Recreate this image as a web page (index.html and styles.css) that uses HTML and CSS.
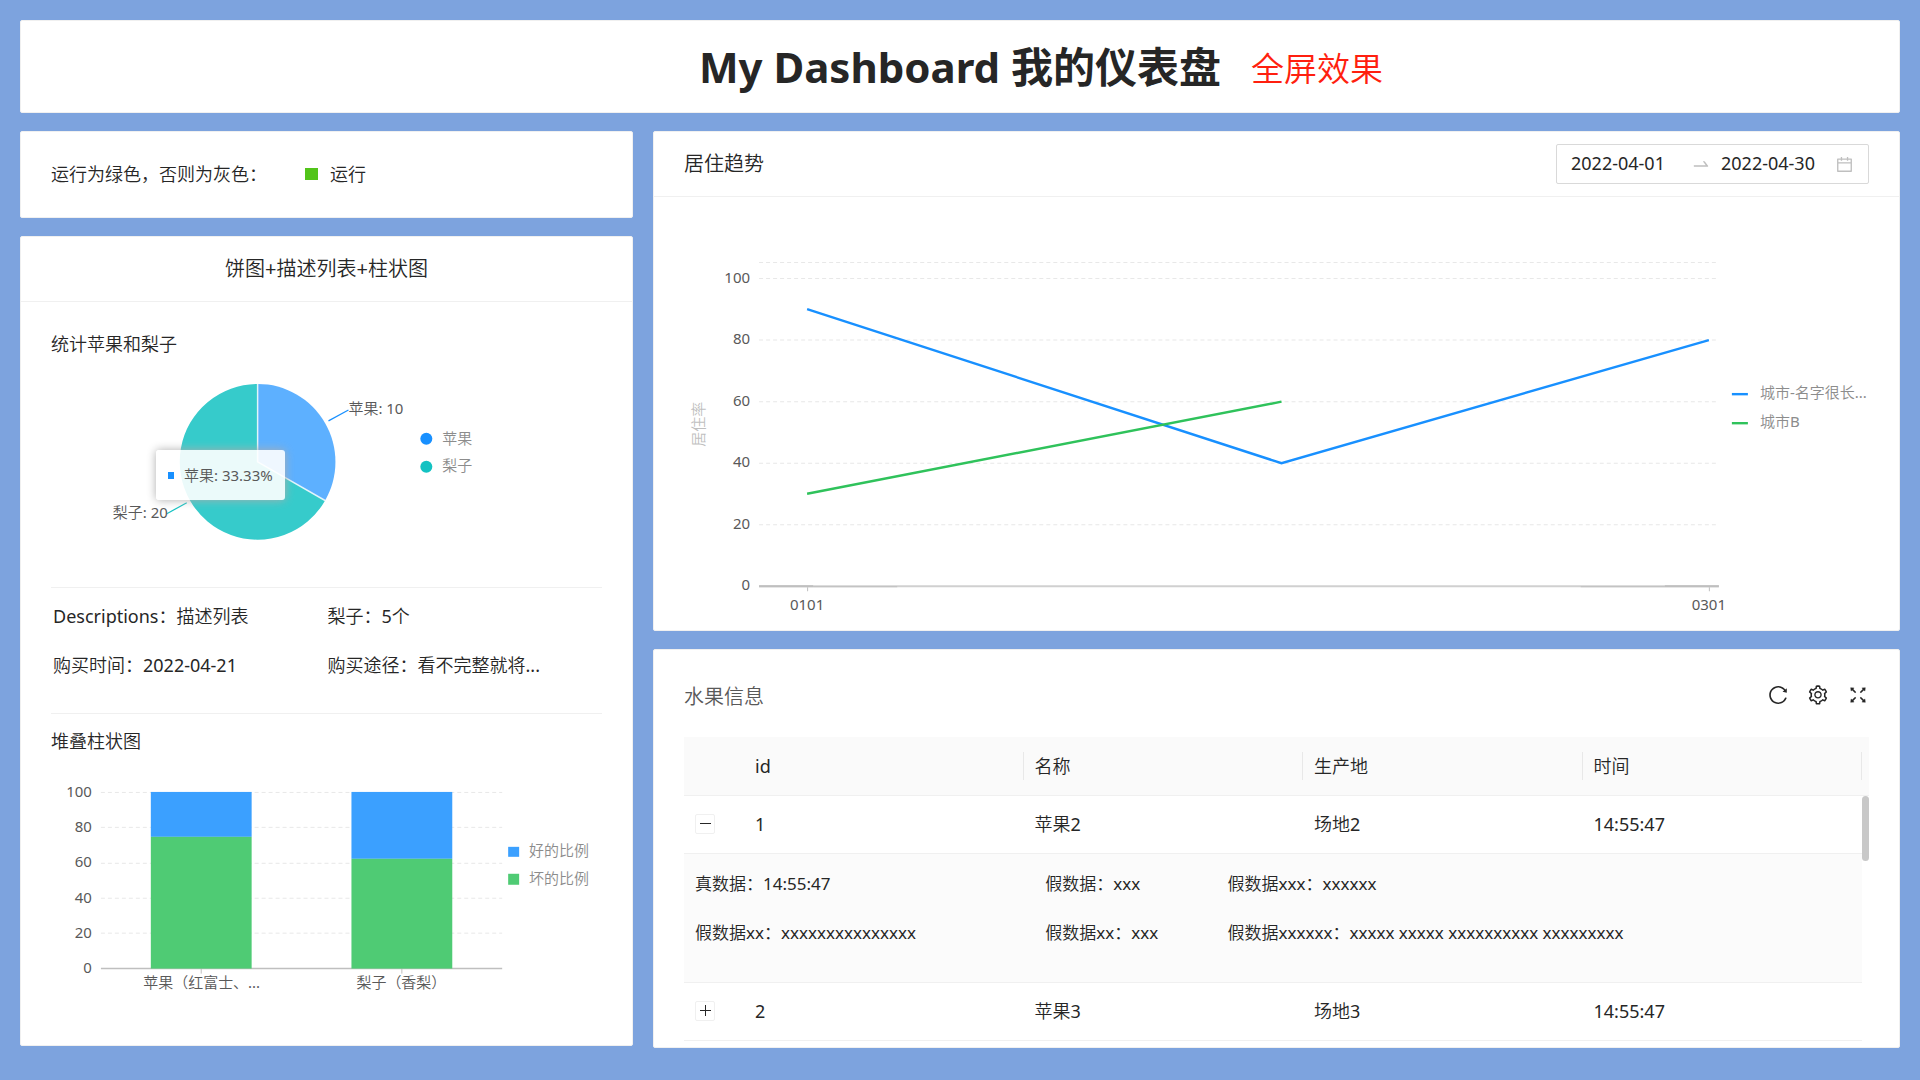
FILE: index.html
```html
<!DOCTYPE html>
<html lang="zh-CN">
<head>
<meta charset="utf-8">
<meta name="viewport" content="width=device-width, initial-scale=1">
<title>My Dashboard 我的仪表盘</title>
<link rel="stylesheet" href="styles.css">
</head>
<body>
<div class="page">
  <header class="card banner">
    <h1 class="banner-title">My Dashboard 我的仪表盘</h1>
    <span class="banner-note">全屏效果</span>
  </header>

  <main class="layout">
    <div class="column">
      <section class="card status">
        <span>运行为绿色，否则为灰色：</span>
        <span class="status-value"><i class="status-mark"></i>运行</span>
      </section>

      <section class="card">
        <div class="card-head card-head-center"><h2 class="card-title">饼图+描述列表+柱状图</h2></div>
        <div class="card-body">
          <h3 class="block-title block-title-first">统计苹果和梨子</h3>
          <div class="pie-wrap">
            <svg class="chart" viewBox="0 0 552 229" role="img" aria-label="统计苹果和梨子">
              <path d="M207 104V26A78 78 0 0 1 274.5 143Z" fill="#5db0ff"/>
              <path d="M207 104L274.5 143A78 78 0 1 1 207 26Z" fill="#36cbcb"/>
              <path d="M207 25V104L275 143" fill="none" stroke="#fff" stroke-opacity=".8" stroke-width="1.5"/>
              <path d="M278 63L298 52" stroke="#1890ff" stroke-width="1.2"/>
              <path d="M136 145L116 156" stroke="#13c2c2" stroke-width="1.2"/>
              <g class="axis-text">
                <text x="298" y="56">苹果: 10</text>
                <text x="117" y="160" text-anchor="end">梨子: 20</text>
              </g>
              <circle cx="376" cy="81" r="6" fill="#1890ff"/>
              <circle cx="376" cy="109" r="6" fill="#13c2c2"/>
              <g class="legend-text">
                <text x="392" y="86">苹果</text>
                <text x="392" y="113">梨子</text>
              </g>
            </svg>
            <div class="tooltip"><i class="tooltip-mark"></i>苹果: 33.33%</div>
          </div>
          <dl class="facts">
            <div class="fact"><dt>Descriptions：</dt><dd>描述列表</dd></div>
            <div class="fact"><dt>梨子：</dt><dd>5个</dd></div>
            <div class="fact"><dt>购买时间：</dt><dd>2022-04-21</dd></div>
            <div class="fact"><dt>购买途径：</dt><dd>看不完整就将...</dd></div>
          </dl>
          <h3 class="block-title">堆叠柱状图</h3>
          <svg class="chart" viewBox="0 0 552 255" role="img" aria-label="堆叠柱状图">
            <path class="grid-line" d="M50 37.5H452M50 72.5H452M50 108.5H452M50 143.5H452M50 178.5H452"/>
            <path d="M50 214H452" stroke="#bfbfbf" stroke-width="1.5"/>
            <path d="M150.500 214V219M351.500 214V219" stroke="#bfbfbf"/>
            <g fill="#3ba0ff"><rect x="100" y="37" width="101" height="45"/><rect x="301" y="37" width="101" height="67"/></g>
            <g fill="#4fcb74"><rect x="100" y="82" width="101" height="132"/><rect x="301" y="104" width="101" height="110"/></g>
            <g class="axis-text" text-anchor="end">
              <text x="41" y="42">100</text><text x="41" y="77">80</text><text x="41" y="112">60</text>
              <text x="41" y="148">40</text><text x="41" y="183">20</text><text x="41" y="218">0</text>
            </g>
            <g class="axis-text" text-anchor="middle">
              <text x="151" y="233">苹果（红富士、...</text>
              <text x="351" y="233">梨子（香梨）</text>
            </g>
            <rect x="458" y="92" width="11" height="10" fill="#3ba0ff"/>
            <rect x="458" y="119" width="11" height="11" fill="#4fcb74"/>
            <g class="legend-text">
              <text x="479" y="101">好的比例</text>
              <text x="479" y="129">坏的比例</text>
            </g>
          </svg>
        </div>
      </section>
    </div>

    <div class="column">
      <section class="card">
        <div class="card-head">
          <h2 class="card-title">居住趋势</h2>
          <div class="range">
            <input class="range-input" type="text" value="2022-04-01" aria-label="开始日期">
            <svg class="range-arrow" viewBox="0 0 1024 1024" aria-hidden="true"><path d="M873.1 596.2l-164-208A32 32 0 00684 376h-64.8c-6.7 0-10.4 7.7-6.3 13l144.3 183H152c-4.4 0-8 3.6-8 8v60c0 4.400 3.600 8 8 8h695.900c26.800 0 41.700-30.800 25.200-51.800z"/></svg>
            <input class="range-input" type="text" value="2022-04-30" aria-label="结束日期">
            <svg class="range-calendar" viewBox="0 0 1024 1024" aria-hidden="true"><path d="M880 184H712v-64c0-4.400-3.600-8-8-8h-56c-4.400 0-8 3.600-8 8v64H384v-64c0-4.400-3.600-8-8-8h-56c-4.400 0-8 3.600-8 8v64H144c-17.700 0-32 14.300-32 32v664c0 17.700 14.300 32 32 32h736c17.700 0 32-14.300 32-32V216c0-17.700-14.300-32-32-32zm-40 656H184V460h656v380zM184 392V256h128v48c0 4.400 3.600 8 8 8h56c4.400 0 8-3.600 8-8v-48h256v48c0 4.400 3.600 8 8 8h56c4.400 0 8-3.600 8-8v-48h128v136H184z"/></svg>
          </div>
        </div>
        <div class="card-body">
          <svg class="chart" viewBox="0 0 1184 433" role="img" aria-label="居住趋势">
            <path class="grid-line" d="M75 65.500H1032M75 81.500H1032M75 143H1032M75 204.500H1032M75 266H1032M75 327.500H1032"/>
            <path d="M75 389H1034" stroke="#d0d0d0" stroke-width="2"/>
            <path d="M75 389H129M980 389H1034" stroke="#bfbfbf" stroke-width="2"/>
            <path d="M129 389.500H213M896 389.500H980M123.500 390V394M1024.500 390V394" stroke="#bfbfbf"/>
            <path d="M123 112L597 266L1024 143" fill="none" stroke="#1890ff" stroke-width="2.400"/>
            <path d="M123 296.500L597 204.500" stroke="#2fc25b" stroke-width="2.400"/>
            <g class="axis-text" text-anchor="end">
              <text x="66" y="86">100</text><text x="66" y="147">80</text><text x="66" y="209">60</text>
              <text x="66" y="270">40</text><text x="66" y="332">20</text><text x="66" y="393">0</text>
            </g>
            <g class="axis-text" text-anchor="middle"><text x="123" y="413">0101</text><text x="1024" y="413">0301</text></g>
            <text class="axis-name" text-anchor="middle" transform="translate(20 227) rotate(-90)">居住率</text>
            <path d="M1047 197H1063" stroke="#1890ff" stroke-width="2.400"/>
            <path d="M1047 226H1063" stroke="#2fc25b" stroke-width="2.400"/>
            <g class="legend-text"><text x="1075" y="201">城市-名字很长...</text><text x="1075" y="230">城市B</text></g>
          </svg>
        </div>
      </section>

      <section class="card table-card">
        <div class="toolbar">
          <h2 class="card-title toolbar-title">水果信息</h2>
          <div class="tools">
            <button class="tool" type="button" aria-label="刷新"><svg viewBox="0 0 1024 1024"><path d="M909.1 209.3l-56.4 44.1C775.8 155.1 656.2 92 521.9 92 290 92 102.3 279.5 102 511.5 101.7 743.7 289.8 932 521.9 932c181.3 0 335.8-115 394.6-276.1 1.5-4.2-.7-8.9-4.9-10.3l-56.7-19.5a8 8 0 00-10.1 4.8c-1.8 5-3.8 10-5.9 14.9-17.3 41-42.1 77.8-73.7 109.4A344.77 344.77 0 01655.9 829c-42.3 17.9-87.4 27-133.8 27-46.5 0-91.5-9.1-133.8-27A341.5 341.5 0 01279 755.2a342.16 342.16 0 01-73.7-109.4c-17.9-42.4-27-87.4-27-133.9s9.1-91.5 27-133.9c17.3-41 42.1-77.8 73.7-109.4 31.6-31.6 68.4-56.4 109.3-73.8 42.3-17.9 87.4-27 133.8-27 46.5 0 91.5 9.1 133.8 27a341.5 341.5 0 01109.3 73.8c9.900 9.900 19.200 20.400 27.800 31.400l-60.200 47a8 8 0 003 14.100l175.600 43c5 1.200 9.900-2.600 9.900-7.700l.8-180.900c-.1-6.600-7.800-10.300-13-6.200z"/></svg></button>
            <button class="tool" type="button" aria-label="列设置"><svg viewBox="0 0 1024 1024"><path d="M924.8 625.7l-65.5-56c3.1-19 4.7-38.4 4.7-57.8s-1.6-38.8-4.7-57.8l65.5-56a32.03 32.03 0 009.3-35.2l-.9-2.6a443.74 443.74 0 00-79.7-137.9l-1.8-2.1a32.12 32.12 0 00-35.1-9.5l-81.3 28.9c-30-24.6-63.5-44-99.7-57.6l-15.7-85a32.05 32.05 0 00-25.8-25.7l-2.7-.5c-52.1-9.4-106.9-9.4-159 0l-2.7.5a32.05 32.05 0 00-25.8 25.7l-15.8 85.4a351.86 351.86 0 00-99 57.4l-81.9-29.1a32 32 0 00-35.1 9.5l-1.8 2.1a446.02 446.02 0 00-79.7 137.9l-.9 2.6c-4.5 12.5-.8 26.5 9.3 35.2l66.3 56.6c-3.1 18.8-4.6 38-4.6 57.1 0 19.2 1.5 38.4 4.6 57.1L99 625.5a32.03 32.03 0 00-9.3 35.2l.9 2.6c18.1 50.4 44.9 96.9 79.7 137.9l1.8 2.1a32.12 32.12 0 0035.1 9.5l81.9-29.1c29.8 24.5 63.1 43.9 99 57.4l15.8 85.4a32.05 32.05 0 0025.8 25.7l2.7.5a449.4 449.4 0 00159 0l2.7-.5a32.05 32.05 0 0025.8-25.7l15.7-85a350 350 0 0099.7-57.6l81.3 28.9a32 32 0 0035.1-9.5l1.8-2.1c34.8-41.1 61.6-87.5 79.7-137.9l.9-2.6c4.5-12.3.8-26.3-9.3-35zM788.3 465.9c2.5 15.1 3.8 30.6 3.8 46.1s-1.3 31-3.8 46.1l-6.6 40.1 74.7 63.9a370.03 370.03 0 01-42.6 73.6L721 702.8l-31.4 25.8c-23.9 19.6-50.5 35-79.3 45.8l-38.1 14.3-17.9 97a377.5 377.5 0 01-85 0l-17.9-97.2-37.8-14.5c-28.5-10.8-55-26.2-78.7-45.7l-31.4-25.9-93.4 33.2c-17-22.9-31.2-47.6-42.6-73.6l75.5-64.5-6.5-40c-2.4-14.9-3.7-30.3-3.7-45.5 0-15.3 1.2-30.6 3.7-45.5l6.5-40-75.500-64.500c11.300-26.100 25.600-50.700 42.600-73.600l93.400 33.200 31.400-25.900c23.700-19.500 50.200-34.900 78.700-45.700l37.900-14.300 17.900-97.200c28.100-3.200 56.800-3.200 85 0l17.900 97 38.100 14.300c28.700 10.800 55.400 26.200 79.300 45.800l31.400 25.800 92.800-32.900c17 22.900 31.200 47.600 42.600 73.600L781.800 426l6.500 39.900zM512 326c-97.200 0-176 78.800-176 176s78.800 176 176 176 176-78.800 176-176-78.800-176-176-176zm79.200 255.200A111.600 111.600 0 01512 614c-29.900 0-58-11.700-79.200-32.800A111.600 111.600 0 01400 502c0-29.900 11.700-58 32.800-79.200C454 401.600 482.100 390 512 390c29.900 0 58 11.600 79.200 32.800A111.600 111.600 0 01624 502c0 29.900-11.700 58-32.800 79.200z"/></svg></button>
            <button class="tool" type="button" aria-label="全屏"><svg viewBox="0 0 1024 1024"><path d="M290 236.4l43.9-43.9a8.01 8.01 0 00-4.7-13.6L169 160c-5.100-.6-9.500 3.700-8.900 8.900L179 329.100c.8 6.600 8.900 9.400 13.600 4.700l43.700-43.700L370 423.700c3.100 3.100 8.200 3.100 11.300 0l42.400-42.300c3.100-3.100 3.100-8.200 0-11.300L290 236.400zm352.700 187.300c3.100 3.100 8.200 3.100 11.300 0l133.700-133.600 43.700 43.700a8.010 8.010 0 0013.600-4.700L863.900 169c.6-5.100-3.700-9.500-8.900-8.900L694.800 179c-6.600.8-9.400 8.900-4.700 13.600l43.900 43.900L600.300 370a8.030 8.030 0 000 11.300l42.400 42.400zM845 694.900c-.8-6.600-8.900-9.400-13.600-4.700l-43.700 43.700L654 600.300a8.030 8.030 0 00-11.300 0l-42.400 42.300a8.030 8.030 0 000 11.300L734 787.600l-43.900 43.900a8.010 8.010 0 004.700 13.600L855 864c5.100.6 9.500-3.700 8.900-8.900L845 694.900zm-463.700-94.600a8.030 8.030 0 00-11.300 0L236.300 733.900l-43.700-43.700a8.010 8.010 0 00-13.600 4.700L160.100 855c-.6 5.100 3.700 9.500 8.900 8.900L329.200 845c6.600-.8 9.400-8.900 4.700-13.600L290 787.600 423.700 654c3.100-3.100 3.100-8.200 0-11.300l-42.400-42.400z"/></svg></button>
          </div>
        </div>
        <div class="table-wrap">
          <table class="table">
            <colgroup><col class="col-expand"><col><col><col><col><col class="col-scroll"></colgroup>
            <thead>
              <tr>
                <th></th>
                <th scope="col"><span class="th-text">id</span></th>
                <th scope="col"><span class="th-text">名称</span></th>
                <th scope="col"><span class="th-text">生产地</span></th>
                <th scope="col"><span class="th-text">时间</span></th>
                <th></th>
              </tr>
            </thead>
            <tbody>
              <tr>
                <td><button class="expand" type="button" aria-label="收起" aria-expanded="true"><svg viewBox="0 0 11 11"><path d="M0 5.500H11"/></svg></button></td>
                <td>1</td><td>苹果2</td><td>场地2</td><td>14:55:47</td><td class="gutter"></td>
              </tr>
              <tr>
                <td class="detail" colspan="5">
                  <dl class="detail-grid">
                    <div class="fact"><dt>真数据：</dt><dd>14:55:47</dd></div>
                    <div class="fact"><dt>假数据：</dt><dd>xxx</dd></div>
                    <div class="fact"><dt>假数据xxx：</dt><dd>xxxxxx</dd></div>
                    <div class="fact"><dt>假数据xx：</dt><dd>xxxxxxxxxxxxxxx</dd></div>
                    <div class="fact"><dt>假数据xx：</dt><dd>xxx</dd></div>
                    <div class="fact"><dt>假数据xxxxxx：</dt><dd>xxxxx xxxxx xxxxxxxxxx xxxxxxxxx</dd></div>
                  </dl>
                </td>
                <td class="gutter"></td>
              </tr>
              <tr>
                <td><button class="expand" type="button" aria-label="展开" aria-expanded="false"><svg viewBox="0 0 11 11"><path d="M0 5.500H11M5.500 0V11"/></svg></button></td>
                <td>2</td><td>苹果3</td><td>场地3</td><td>14:55:47</td><td class="gutter"></td>
              </tr>
            </tbody>
          </table>
          <div class="scroll-thumb"></div>
        </div>
      </section>
    </div>
  </main>
</div>
</body>
</html>
```
FILE: styles.css
```css
* { box-sizing: border-box; }

body {
  margin: 0;
  background: #7da3de;
  color: #262626;
  font: 400 18px/28px "Noto Sans", "Noto Sans CJK SC DemiLight", "Noto Sans CJK SC Light", "Noto Sans CJK SC", sans-serif;
}

h1, h2, h3, dl, dd { margin: 0; }
h2, h3 { font-weight: inherit; }

.page {
  display: flex;
  flex-direction: column;
  gap: 18px;
  padding: 20px 20px 32px;
}

.card {
  background: #fff;
  border: 1px solid #f0f0f0;
  border-radius: 2px;
}

/* Banner */
.banner {
  display: grid;
  grid-template-columns: 1fr auto 1fr;
  align-items: center;
  padding: 17px 30px;
}
.banner-title {
  grid-column: 2;
  font-family: "Noto Sans", "Noto Sans CJK SC", sans-serif;
  font-size: 42px;
  line-height: 57px;
  font-weight: 700;
}
.banner-note {
  padding: 4px 0 0 30px;
  color: #ff1f0f;
  font-size: 33px;
  line-height: 48px;
}

/* Columns */
.layout {
  display: grid;
  grid-template-columns: minmax(0, 613fr) minmax(0, 1247fr);
  gap: 20px;
  align-items: start;
}
.column {
  display: flex;
  flex-direction: column;
  gap: 18px;
}

.card-head {
  display: flex;
  align-items: center;
  justify-content: space-between;
  padding: 12px 30px;
  min-height: 65px;
  border-bottom: 1px solid #f0f0f0;
}
.card-head-center { justify-content: center; }
.card-title { font-size: 20px; line-height: 32px; }
.card-body { padding: 0 30px; }

/* Running state */
.status {
  display: flex;
  align-items: center;
  gap: 38px;
  padding: 28px 30px 29px;
}
.status-value { display: flex; align-items: center; gap: 12px; }
.status-mark { width: 13px; height: 12px; background: #52c41a; }

.block-title { font-size: 18px; padding-top: 13px; }
.block-title-first { padding-top: 28px; }

/* Charts */
.chart { display: block; width: 100%; height: auto; }
.column > .card:last-child .card-body { padding-bottom: 36px; }
.axis-text { font-size: 15px; fill: #595959; }
.legend-text { font-size: 15px; fill: #8c8c8c; }
.axis-name { font-size: 15px; fill: #bfbfbf; }
.grid-line { fill: none; stroke: #e8e8e8; stroke-dasharray: 4 3; }

.pie-wrap { position: relative; }
.tooltip {
  position: absolute;
  left: 105px;
  top: 92px;
  display: flex;
  align-items: center;
  gap: 10px;
  height: 50px;
  padding: 0 12px;
  border-radius: 3px;
  background: rgba(255, 255, 255, .9);
  box-shadow: 0 0 10px #aeaeae;
  color: #595959;
  font-size: 15px;
  white-space: nowrap;
}
.tooltip-mark { width: 6px; height: 7px; background: #1890ff; }

/* Label and value lists */
.fact { display: flex; min-width: 0; white-space: nowrap; }
.facts {
  display: grid;
  grid-template-columns: 1fr 1fr;
  gap: 21px 0;
  padding: 14px 0 34px 2px;
  border-top: 1px solid #f0f0f0;
  border-bottom: 1px solid #f0f0f0;
}

/* Date range */
.range {
  display: flex;
  align-items: center;
  height: 40px;
  padding: 0 14px;
  border: 1px solid #d9d9d9;
  border-radius: 2px;
}
.range-input {
  width: 114px;
  padding: 0 0 2px;
  border: 0;
  outline: 0;
  background: none;
  color: inherit;
  font: inherit;
}
.range-arrow, .range-calendar { fill: #bfbfbf; }
.range-arrow { width: 20px; height: 20px; margin: 0 10px 0 6px; }
.range-calendar { width: 19px; height: 19px; }

/* Fruit table */
.table-card { padding: 29px 30px 6px; }
.toolbar {
  display: flex;
  align-items: center;
  justify-content: space-between;
  height: 36px;
  margin-bottom: 22px;
}
.toolbar-title { color: #595959; }
.tools { display: flex; gap: 18px; padding-bottom: 4px; }
.tool { width: 22px; height: 22px; padding: 0; border: 0; background: none; }
.tool svg { display: block; width: 100%; height: 100%; fill: #262626; }

.table-wrap { position: relative; }
.table {
  width: 100%;
  table-layout: fixed;
  border-collapse: separate;
  border-spacing: 0;
  text-align: left;
}
.col-expand { width: 60px; }
.col-scroll { width: 7px; }
.table th {
  height: 59px;
  padding: 0;
  background: #fafafa;
  border-bottom: 1px solid #f0f0f0;
  font-weight: inherit;
}
.th-text {
  display: block;
  padding-left: 11px;
  border-right: 1px solid #e8e8e8;
}
.table td {
  height: 58px;
  padding: 0 11px 2px;
  border-bottom: 1px solid #f0f0f0;
}
.table .gutter { padding: 0; border-bottom: 0; }
.table .detail { padding: 16px 11px 35px; background: #fbfbfb; }
.detail-grid {
  display: grid;
  grid-template-columns: 350fr 182fr 623fr;
  gap: 21px 0;
  font-size: 17px;
}
.expand {
  display: flex;
  align-items: center;
  justify-content: center;
  width: 20px;
  height: 20px;
  padding: 0;
  border: 1px solid #f0f0f0;
  border-radius: 2px;
  background: #fff;
}
.expand svg { width: 11px; height: 11px; stroke: #262626; }
.scroll-thumb {
  position: absolute;
  top: 59px;
  right: 0;
  width: 7px;
  height: 65px;
  border-radius: 4px;
  background: #c8c8c8;
}
```
